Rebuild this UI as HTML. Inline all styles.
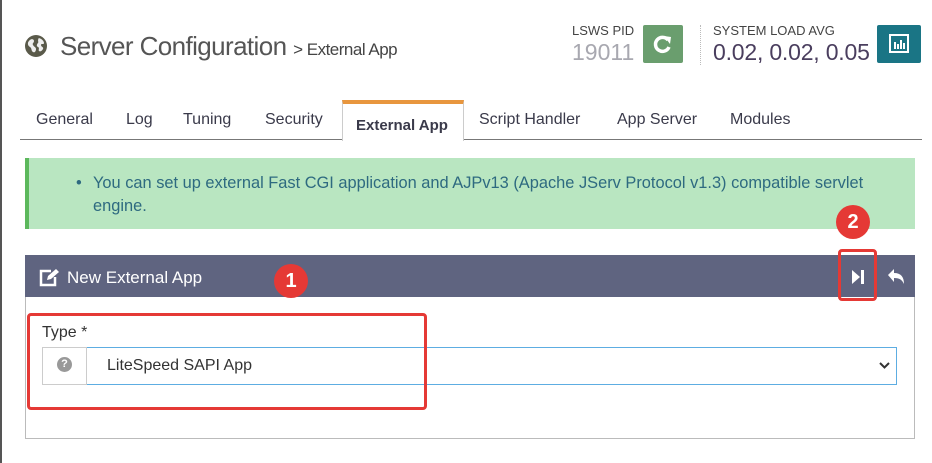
<!DOCTYPE html>
<html><head><meta charset="utf-8"><style>
*{box-sizing:border-box;margin:0;padding:0}
body{width:932px;height:463px;background:#fff;font-family:"Liberation Sans",sans-serif;position:relative;overflow:hidden;color:#333}
.a{position:absolute;white-space:nowrap}
.tab{position:absolute;top:111px;font-size:16px;color:#3a3a4a}
</style></head><body>
<div class="a" style="left:0;top:0;width:2px;height:463px;background:#555"></div>
<svg class="a" style="left:25px;top:35px" width="22" height="22" viewBox="0 0 22 22"><circle cx="11" cy="11" r="11" fill="#5a5a4a"/><path d="M4 6c2-3 5-2 5 0s-2 2-1 4 3 2 3 4-1 4-3 3-1-4-3-5S2 8 4 6zM13 3c3 0 6 3 6 5s-3 0-3 2 3 2 2 4-3 3-4 2 1-3-1-4-1-3 0-4-1-3 1-5z" fill="#eee"/></svg>
<div class="a" style="left:60px;top:31px;font-size:26px;color:#555;letter-spacing:-0.6px">Server Configuration <span style="font-size:17px;color:#444;letter-spacing:-0.5px">&gt; External App</span></div>
<div class="a" style="left:572px;top:23px;font-size:13px;color:#444">LSWS PID</div>
<div class="a" style="left:572px;top:39px;font-size:23px;color:#a8a8b0">19011</div>
<div class="a" style="left:643px;top:25px;width:40px;height:38px;background:#6a9e6e;border-radius:2px"></div>
<svg class="a" style="left:653px;top:34px" width="20" height="20" viewBox="0 0 20 20"><path d="M15 6A7 7 0 1 0 16 13" fill="none" stroke="#fff" stroke-width="3.5"/><path d="M11 2l7 1-1 7z" fill="#fff"/></svg>
<div class="a" style="left:700px;top:25px;height:40px;border-left:1px dotted #bbb"></div>
<div class="a" style="left:713px;top:23px;font-size:13px;color:#444">SYSTEM LOAD AVG</div>
<div class="a" style="left:713px;top:39px;font-size:23px;color:#4a3e5e;letter-spacing:-0.2px">0.02, 0.02, 0.05</div>
<div class="a" style="left:877px;top:25px;width:44px;height:38px;background:#1a7585;border-radius:2px"></div>
<svg class="a" style="left:889px;top:34px" width="20" height="19" viewBox="0 0 20 19"><rect x="1" y="1" width="18" height="17" fill="none" stroke="#fff" stroke-width="2"/><rect x="5" y="8" width="2" height="7" fill="#fff"/><rect x="8" y="10" width="2" height="5" fill="#fff"/><rect x="11" y="6" width="2" height="9" fill="#fff"/><rect x="14" y="9" width="2" height="6" fill="#fff"/></svg>
<div class="a" style="left:20px;top:139px;width:902px;height:1px;background:#777"></div>
<div class="a" style="left:342px;top:100px;width:122px;height:41px;background:#fff;border:1px solid #ccc;border-bottom:none;border-top:4px solid #e8963e"></div>
<div class="tab" style="left:36px">General</div>
<div class="tab" style="left:126px">Log</div>
<div class="tab" style="left:183px">Tuning</div>
<div class="tab" style="left:265px">Security</div>
<div class="tab" style="left:356px;top:117px;font-weight:bold;font-size:15px">External App</div>
<div class="tab" style="left:479px">Script Handler</div>
<div class="tab" style="left:617px">App Server</div>
<div class="tab" style="left:730px">Modules</div>
<div class="a" style="left:25px;top:158px;width:890px;height:71px;background:#b9e6c1;border-left:4px solid #5cb85c"></div>
<div class="a" style="left:76px;top:172px;font-size:16.4px;color:#2e6a80;line-height:23px">•</div>
<div class="a" style="left:93px;top:172px;font-size:16.4px;color:#2e6a80;line-height:23px">You can set up external Fast CGI application and AJPv13 (Apache JServ Protocol v1.3) compatible servlet<br>engine.</div>
<div class="a" style="left:25px;top:255px;width:890px;height:184px;border:1px solid #bbb"></div>
<div class="a" style="left:25px;top:255px;width:890px;height:42px;background:#5f6480"></div>
<svg class="a" style="left:38px;top:268px" width="22" height="19" viewBox="0 0 22 19"><path d="M13 3H3v14h14V9" fill="none" stroke="#fff" stroke-width="2.5"/><path d="M9 12l1-4 8-7 3 3-8 7z" fill="#fff"/></svg>
<div class="a" style="left:67px;top:268px;font-size:17px;color:#fff">New External App</div>
<svg class="a" style="left:851px;top:269px" width="14" height="16" viewBox="0 0 14 16"><path d="M1 1l8 7-8 7z" fill="#fff"/><rect x="10" y="1" width="3" height="14" fill="#fff"/></svg>
<svg class="a" style="left:887px;top:268px" width="18" height="17" viewBox="0 0 18 17"><path d="M1 7l6-6v4c7 0 10 4 10 11-2-4-4-6-10-6v4z" fill="#fff"/></svg>
<div class="a" style="left:838px;top:249px;width:39px;height:52px;border:3px solid #e53935;border-radius:4px"></div>
<div class="a" style="left:836px;top:205px;width:34px;height:34px;border-radius:50%;background:#e53935;color:#fff;font-size:20px;font-weight:bold;text-align:center;line-height:34px">2</div>
<div class="a" style="left:274px;top:264px;width:34px;height:34px;border-radius:50%;background:#e53935;color:#fff;font-size:20px;font-weight:bold;text-align:center;line-height:34px">1</div>
<div class="a" style="left:42px;top:324px;font-size:16px;color:#333">Type *</div>
<div class="a" style="left:42px;top:347px;width:855px;height:38px;border:1px solid #5dade2;border-left:1px solid #ccc"></div>
<div class="a" style="left:42px;top:347px;width:45px;height:38px;border:1px solid #ccc;background:#fff"></div>
<div class="a" style="left:57px;top:357px;width:15px;height:15px;border-radius:50%;background:#999;color:#fff;font-size:11px;font-weight:bold;text-align:center;line-height:15px">?</div>
<div class="a" style="left:107px;top:357px;font-size:16px;color:#333">LiteSpeed SAPI App</div>
<svg class="a" style="left:879px;top:362px" width="11" height="8" viewBox="0 0 11 8"><path d="M1 1l4.5 4.5L10 1" fill="none" stroke="#333" stroke-width="2"/></svg>
<div class="a" style="left:27px;top:313px;width:400px;height:97px;border:3px solid #e53935;border-radius:4px"></div>
</body></html>
